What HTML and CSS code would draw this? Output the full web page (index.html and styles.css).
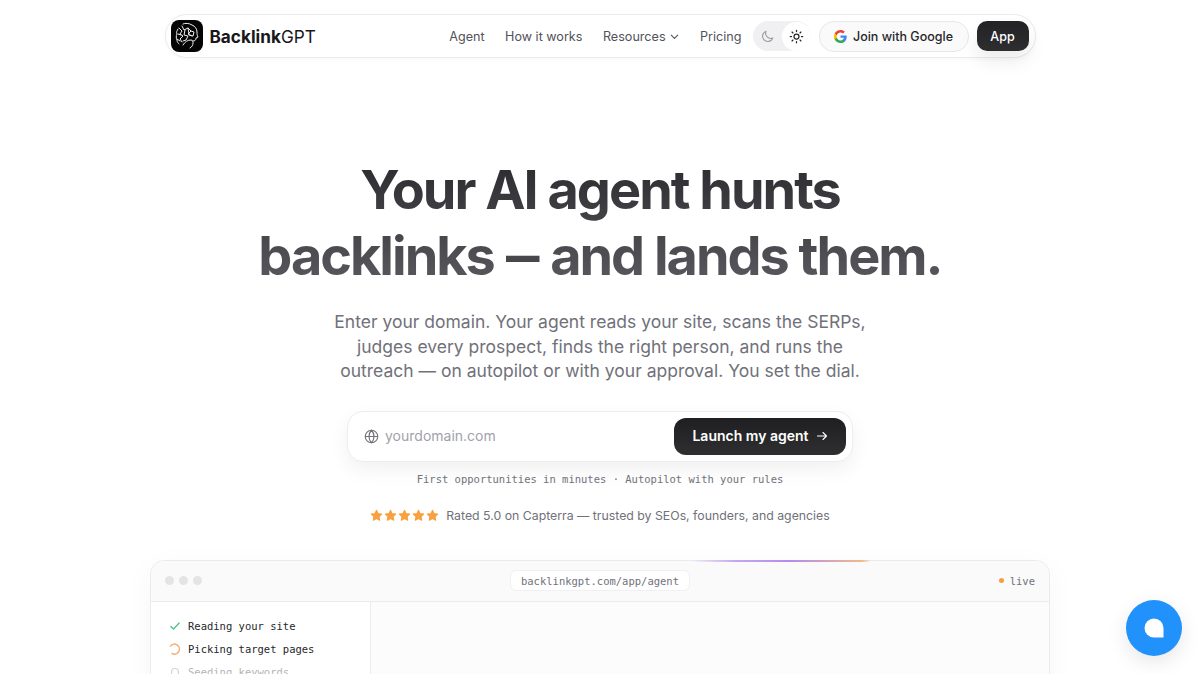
FILE: index.html
```html
<!DOCTYPE html>
<html lang="en">
<head>
<meta charset="utf-8">
<title>BacklinkGPT</title>
<link rel="stylesheet" href="styles.css">
</head>
<body>
<header class="nav">
  <a class="brand">
    <span class="logo">
      <svg viewBox="0 0 32 32" width="32" height="32">
        <rect width="32" height="32" rx="8" fill="#050505"/>
        <g fill="none" stroke="#eee" stroke-width="1" stroke-linecap="round" stroke-linejoin="round">
          <path d="M12 25c2-3 4-5 8-5 2 0 2 2 2 3 0 2-1 4-3 5M22 21c2 0 3-1 3-3l2-1c-1-2-1-3-1-5 0-3-2-6-5-7-3-2-7-2-9-1"/>
          <path d="M7 9c-1 2-2 3-1 5-1 2-1 4 0 6 0 2 1 3 2 4M8 8l3 3-2 3 3 2-3 3 2 3M11 6l2 4 4-2 3 3-3 3 4 2M7 14l3 1M14 10l-1 5 4 1-2 4-3 1M17 8l1 6M20 11l3 1-1 4-4-1M6 19l3 2"/>
        </g>
      </svg>
    </span>
    <span class="brand-name"><b>Backlink</b>GPT</span>
  </a>
  <nav class="links">
    <a>Agent</a>
    <a>How it works</a>
    <a class="has-caret">Resources
      <svg viewBox="0 0 12 12" width="11" height="11"><path d="M2.500 4.500 6 8l3.500-3.500" fill="none" stroke="#555" stroke-width="1.200" stroke-linecap="round" stroke-linejoin="round"/></svg>
    </a>
    <a>Pricing</a>
  </nav>
  <div class="theme">
    <span class="theme-btn">
      <svg viewBox="0 0 24 24" width="15" height="15"><path d="M20.500 14.500A8.500 8.500 0 0 1 9.500 3.500a8.500 8.500 0 1 0 11 11Z" fill="none" stroke="#9a9aa0" stroke-width="1.800" stroke-linejoin="round"/></svg>
    </span>
    <span class="theme-btn active">
      <svg viewBox="0 0 24 24" width="15" height="15" fill="none" stroke="#27272a" stroke-width="2" stroke-linecap="round"><circle cx="12" cy="12" r="4"/><path d="M12 2v2M12 20v2M2 12h2M20 12h2M4.900 4.900l1.400 1.400M17.700 17.700l1.400 1.400M4.900 19.100l1.400-1.400M17.700 6.300l1.400-1.400"/></svg>
    </span>
  </div>
  <a class="google">
    <svg viewBox="0 0 24 24" width="13" height="13">
      <path fill="#4285F4" d="M23.500 12.300c0-.8-.1-1.600-.2-2.300H12v4.500h6.500c-.3 1.500-1.100 2.700-2.400 3.600v3h3.900c2.200-2.100 3.500-5.100 3.500-8.800Z"/>
      <path fill="#34A853" d="M12 24c3.200 0 6-1.100 8-2.900l-3.900-3c-1.100.7-2.500 1.200-4.100 1.200-3.100 0-5.800-2.100-6.700-5H1.300v3.100C3.300 21.300 7.300 24 12 24Z"/>
      <path fill="#FBBC05" d="M5.300 14.300c-.5-1.500-.5-3.100 0-4.600V6.600h-4a12 12 0 0 0 0 10.800l4-3.100Z"/>
      <path fill="#EA4335" d="M12 4.800c1.800 0 3.300.6 4.600 1.800L20 3.200C18 1.200 15.200 0 12 0 7.300 0 3.300 2.700 1.300 6.600l4 3.100c.9-2.800 3.600-4.900 6.700-4.900Z"/>
    </svg>
    Join with Google
  </a>
  <a class="app">App</a>
</header>

<main class="hero">
  <h1><span>Your AI agent hunts</span><span>backlinks <em class="dash">—</em> and lands them.</span></h1>
  <p class="lead">Enter your domain. Your agent reads your site, scans the SERPs, judges every prospect, finds the right person, and runs the outreach — on autopilot or with your approval. You set the dial.</p>
  <form class="domain">
    <svg viewBox="0 0 24 24" width="15" height="15" fill="none" stroke="#71717a" stroke-width="1.800"><circle cx="12" cy="12" r="10"/><path d="M2 12h20M12 2c3 3 4 6.500 4 10s-1 7-4 10c-3-3-4-6.500-4-10s1-7 4-10Z"/></svg>
    <span class="placeholder">yourdomain.com</span>
    <span class="launch">Launch my agent
      <svg viewBox="0 0 12 12" width="12" height="12" fill="none" stroke="#fff" stroke-width="1.100" stroke-linecap="round" stroke-linejoin="round"><path d="M1.500 6h9M7 2.500 10.500 6 7 9.500"/></svg>
    </span>
  </form>
  <p class="note">First opportunities in minutes · Autopilot with your rules</p>
  <div class="rating">
    <span class="stars">
      <svg viewBox="0 0 24 24" width="13" height="13"><path class="star" d="M12 2.500l2.900 6.100 6.600.9-4.800 4.600 1.200 6.600L12 17.500l-5.900 3.200 1.200-6.600L2.500 9.500l6.600-.9Z"/></svg>
      <svg viewBox="0 0 24 24" width="13" height="13"><path class="star" d="M12 2.500l2.900 6.100 6.600.9-4.800 4.600 1.200 6.600L12 17.500l-5.900 3.200 1.200-6.600L2.500 9.500l6.600-.9Z"/></svg>
      <svg viewBox="0 0 24 24" width="13" height="13"><path class="star" d="M12 2.500l2.900 6.100 6.600.9-4.800 4.600 1.200 6.600L12 17.500l-5.900 3.200 1.200-6.600L2.500 9.500l6.600-.9Z"/></svg>
      <svg viewBox="0 0 24 24" width="13" height="13"><path class="star" d="M12 2.500l2.900 6.100 6.600.9-4.800 4.600 1.200 6.600L12 17.500l-5.900 3.200 1.200-6.600L2.500 9.500l6.600-.9Z"/></svg>
      <svg viewBox="0 0 24 24" width="13" height="13"><path class="star" d="M12 2.500l2.900 6.100 6.600.9-4.800 4.600 1.200 6.600L12 17.500l-5.900 3.200 1.200-6.600L2.500 9.500l6.600-.9Z"/></svg>
    </span>
    <span>Rated 5.0 on Capterra — trusted by SEOs, founders, and agencies</span>
  </div>

  <section class="window">
    <div class="glow"></div>
    <div class="bar">
      <div class="dots"><i></i><i></i><i></i></div>
      <div class="url">backlinkgpt.com/app/agent</div>
      <div class="live"><i></i>live</div>
    </div>
    <div class="body">
      <ul class="steps">
        <li class="done">
          <svg viewBox="0 0 12 12" width="12" height="12" fill="none" stroke="#4cc38a" stroke-width="1.300" stroke-linecap="round" stroke-linejoin="round"><path d="M1.800 6.500 4.500 9l5.700-6"/></svg>
          Reading your site
        </li>
        <li class="now">
          <svg viewBox="0 0 12 12" width="12" height="12" fill="none" stroke="#f4b27a" stroke-width="1.500" stroke-linecap="round"><path d="M1.500 3A5 5 0 1 1 3 10.500"/></svg>
          Picking target pages
        </li>
        <li class="todo">
          <svg viewBox="0 0 12 12" width="12" height="12" fill="none" stroke="#d4d4d8" stroke-width="1.200"><circle cx="6" cy="6" r="3.500"/></svg>
          Seeding keywords
        </li>
      </ul>
      <div class="pane"></div>
    </div>
  </section>
</main>

<a class="chat">
  <svg viewBox="0 0 22 22" width="22" height="22"><path d="M11 1.500a9.500 9.500 0 1 0 0 19h9.500V11A9.500 9.500 0 0 0 11 1.500Z" fill="#fff"/></svg>
</a>
</body>
</html>
```
FILE: styles.css
```css
* { box-sizing: border-box; }
html, body { height: 100%; }
body {
  margin: 0;
  height: 674px;
  overflow: hidden;
  background: #fff;
  color: #27272a;
  font-family: Inter, "Liberation Sans", sans-serif;
}
a { color: inherit; text-decoration: none; }

.nav {
  width: 871px;
  height: 44px;
  margin: 14px auto 0;
  padding: 0 6px 0 5px;
  display: flex;
  align-items: center;
  border: 1px solid #ebebed;
  border-radius: 22px;
  background: #fff;
  box-shadow: 0 1px 4px rgba(0,0,0,.03);
}
.brand { display: flex; align-items: center; gap: 7px; }
.logo { display: block; width: 32px; height: 32px; }
.brand-name { font-size: 17.200px; color: #18181b; }
.brand-name b { font-weight: 700; }
.links {
  margin-left: auto;
  display: flex;
  align-items: center;
  gap: 20.500px;
  font-size: 12.600px;
  color: #52525b;
}
.has-caret { display: flex; align-items: center; gap: 3px; }
.theme {
  margin-left: 11px;
  height: 30px;
  display: flex;
  align-items: center;
  border-radius: 15px;
  background: #f0f0f2;
}
.theme-btn {
  width: 29px;
  height: 29px;
  display: flex;
  align-items: center;
  justify-content: center;
  border-radius: 50%;
}
.theme-btn.active { background: #fff; }
.google {
  margin-left: 8px;
  width: 150px;
  height: 31px;
  display: flex;
  align-items: center;
  justify-content: center;
  gap: 6px;
  border: 1px solid #e8e8ea;
  border-radius: 15px;
  background: #fafafa;
  font-size: 12.500px;
  font-weight: 500;
  color: #27272a;
}
.app {
  margin-left: 8px;
  width: 52px;
  height: 30px;
  display: flex;
  align-items: center;
  justify-content: center;
  border-radius: 10px;
  background: linear-gradient(#232325, #2e2e30);
  color: #fff;
  font-size: 12.500px;
  font-weight: 500;
  box-shadow: 0 10px 18px rgba(0,0,0,.08);
}

.hero {
  display: flex;
  flex-direction: column;
  align-items: center;
}
h1 {
  margin: 99px 0 0;
  font-size: 54px;
  line-height: 66px;
  font-weight: 650;
  letter-spacing: -2px;
  text-align: center;
  background: linear-gradient(#2a2a2e, #5a5a60);
  -webkit-background-clip: text;
  background-clip: text;
  color: transparent;
}
h1 span { display: block; }
.dash {
  display: inline-block;
  margin: 0 -.16em;
  font-style: normal;
  color: #47474c;
  transform: scaleX(.62);
}
.lead {
  width: 560px;
  margin: 21px 0 0;
  font-size: 17.500px;
  line-height: 24.500px;
  text-align: center;
  color: #71717a;
}
.domain {
  width: 506px;
  height: 51px;
  margin: 27px 0 0;
  padding: 0 6px 0 16px;
  display: flex;
  align-items: center;
  gap: 6px;
  border: 1px solid #ededef;
  border-radius: 16px;
  background: #fff;
  box-shadow: 0 8px 20px rgba(0,0,0,.06);
}
.placeholder { flex: 1; padding-bottom: 1px; font-size: 14px; color: #a1a1aa; }
.launch {
  width: 172px;
  height: 37px;
  padding-bottom: 1px;
  display: flex;
  align-items: center;
  justify-content: center;
  gap: 7px;
  border-radius: 12px;
  background: linear-gradient(#1f1f21, #2f2f31);
  color: #fff;
  font-size: 14px;
  font-weight: 600;
}
.note {
  margin: 10px 0 0;
  font-family: "DejaVu Sans Mono", "Liberation Mono", monospace;
  font-size: 10.500px;
  line-height: 14px;
  color: #71717a;
}
.rating {
  margin-top: 22px;
  display: flex;
  align-items: center;
  gap: 7px;
  font-size: 12.300px;
  line-height: 16px;
  color: #71717a;
}
.stars { display: flex; gap: 1px; }
.star { fill: #f9a03f; stroke: #f9a03f; stroke-width: 2; stroke-linejoin: round; }

.window {
  position: relative;
  width: 900px;
  margin-top: 36px;
  border: 1px solid #ebebed;
  border-radius: 14px;
  background: #fff;
  box-shadow: 0 8px 30px rgba(0,0,0,.04);
}
.glow {
  position: absolute;
  top: -1px;
  left: 540px;
  width: 180px;
  height: 2px;
  background: linear-gradient(90deg, transparent, #c4a7f0 25%, #b48cec 55%, #f2b98c 95%, transparent);
}
.bar {
  height: 41px;
  padding: 0 14px;
  display: flex;
  align-items: center;
  justify-content: space-between;
  border-bottom: 1px solid #ebebed;
  border-radius: 14px 14px 0 0;
  background: #fafafa;
}
.dots { display: flex; gap: 5px; width: 120px; }
.dots i { width: 9px; height: 9px; border-radius: 50%; background: #e4e4e7; }
.url {
  height: 21px;
  padding: 0 10px;
  display: flex;
  align-items: center;
  border: 1px solid #f0f0f2;
  border-radius: 6px;
  background: #fff;
  font-family: "DejaVu Sans Mono", "Liberation Mono", monospace;
  font-size: 10.500px;
  color: #71717a;
}
.live {
  width: 120px;
  display: flex;
  align-items: center;
  justify-content: flex-end;
  gap: 6px;
  font-family: "DejaVu Sans Mono", "Liberation Mono", monospace;
  font-size: 10.500px;
  color: #71717a;
}
.live i { width: 5px; height: 5px; border-radius: 50%; background: #f59e3f; }
.body { display: flex; height: 300px; }
.steps {
  width: 220px;
  margin: 0;
  padding: 13px 18px;
  list-style: none;
  border-right: 1px solid #ebebed;
  font-family: "DejaVu Sans Mono", "Liberation Mono", monospace;
  font-size: 10.500px;
}
.steps li { height: 23px; display: flex; align-items: center; gap: 7px; }
.done, .now { color: #27272a; }
.todo { color: #b4b4ba; }
.pane { flex: 1; background: #fcfcfc; }

.chat {
  position: fixed;
  right: 18px;
  bottom: 18px;
  width: 56px;
  height: 56px;
  display: flex;
  align-items: center;
  justify-content: center;
  border-radius: 50%;
  background: #2191fb;
  box-shadow: 0 6px 20px rgba(0,0,0,.1);
}
```
